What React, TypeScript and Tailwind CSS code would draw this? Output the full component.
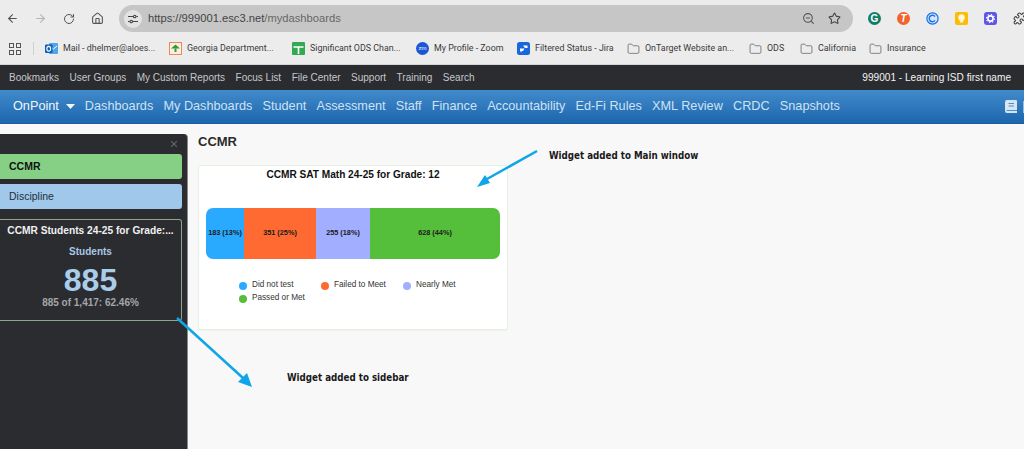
import { ArrowLeft, ArrowRight, RotateCw, Home, Star, ZoomOut, Folder, Puzzle, X } from 'lucide-react';

const topLinks = ['Bookmarks', 'User Groups', 'My Custom Reports', 'Focus List', 'File Center', 'Support', 'Training', 'Search'];
const navLinks = ['Dashboards', 'My Dashboards', 'Student', 'Assessment', 'Staff', 'Finance', 'Accountability', 'Ed-Fi Rules', 'XML Review', 'CRDC', 'Snapshots'];

const segments = [
  { label: '183 (13%)', color: 'bg-[#2aaaff]', width: 'w-[38px]' },
  { label: '351 (25%)', color: 'bg-[#ff6a33]', width: 'w-[72px]' },
  { label: '255 (18%)', color: 'bg-[#a2aeff]', width: 'w-[54px]' },
  { label: '628 (44%)', color: 'bg-[#55bf3b]', width: 'flex-1' },
];

function Bookmark({ icon, label, className, labelWidth }: { icon: React.ReactNode; label: string; className: string; labelWidth: string }) {
  return (
    <div className={`flex items-center gap-[5px] shrink-0 ${className}`}>
      {icon}
      <span className={`text-[8.9px] text-[#3a3a3a] whitespace-nowrap font-['Roboto',sans-serif] ${labelWidth}`}>{label}</span>
    </div>
  );
}

function FolderIcon() {
  return <Folder size={14} strokeWidth={1.3} className="text-[#555] w-[13px]" />;
}

function OutlookIcon() {
  return (
    <svg width="13" height="13" viewBox="0 0 13 13">
      <rect x="4" y="1" width="9" height="11" rx="1" fill="#50a5ea" />
      <path d="M5 4l3.5 3L12 4" fill="none" stroke="#fff" strokeWidth="1" />
      <rect x="0" y="2.5" width="7.5" height="8.5" rx="1" fill="#0f5fb5" />
      <ellipse cx="3.75" cy="6.75" rx="1.9" ry="2.4" fill="none" stroke="#fff" strokeWidth="1.1" />
    </svg>
  );
}

function GeorgiaIcon() {
  return (
    <svg width="13" height="13" viewBox="0 0 13 13">
      <rect x="0.5" y="0.5" width="12" height="12" fill="#fdeee2" stroke="#ee8a4e" />
      <path d="M6.5 2.5L11 6.5H2z" fill="#2f9a3f" />
      <rect x="5.5" y="6.5" width="2" height="3.5" fill="#2f9a3f" />
    </svg>
  );
}

function SheetIcon() {
  return (
    <svg width="13" height="13" viewBox="0 0 13 13">
      <rect width="13" height="13" rx="1" fill="#34a853" />
      <path d="M1.5 5h10M6.5 5v7" stroke="#fff" strokeWidth="1.6" />
    </svg>
  );
}

function JiraIcon() {
  return (
    <svg width="13" height="13" viewBox="0 0 13 13">
      <rect width="13" height="13" rx="2.5" fill="#1868db" />
      <path d="M6 3.5h4.5v2.5H8zM3 6.5h4.5L6 9H4.5v1.5L3 9z" fill="#fff" />
    </svg>
  );
}

function Legend({ color, label, className }: { color: string; label: string; className: string }) {
  return (
    <div className={`flex items-center gap-[5px] h-[13px] ${className}`}>
      <span className={`w-2 h-2 rounded-full ${color}`} />
      <span className="text-[8.2px] text-[#333]">{label}</span>
    </div>
  );
}

function Extensions() {
  return (
    <>
      <div className="ml-[15px] w-[13px] h-[13px] shrink-0 rounded-full bg-[#0f7d68] text-white text-[10px] font-bold flex items-center justify-center">G</div>
      <div className="ml-[16px] w-[13px] h-[13px] shrink-0 rounded-full bg-[#f4622d] text-white text-[10px] italic font-bold flex items-center justify-center">T</div>
      <svg width="13" height="13" viewBox="0 0 13 13" className="ml-[16px] shrink-0" fill="none">
        <circle cx="6.5" cy="6.5" r="6.5" fill="#d5e6fb" />
        <circle cx="6.5" cy="6.5" r="5.6" stroke="#1a73e8" strokeWidth="1.2" />
        <path d="M9 4.6a3.2 3.2 0 1 0 0 3.8" stroke="#1a73e8" strokeWidth="1.4" />
      </svg>
      <svg width="13" height="13" viewBox="0 0 13 13" className="ml-[16px] shrink-0">
        <rect width="13" height="13" rx="2" fill="#fbbc04" />
        <circle cx="6.5" cy="5.5" r="3.2" fill="#fff8dc" />
        <rect x="4.8" y="8" width="3.4" height="2.5" rx="0.6" fill="#fff8dc" />
      </svg>
      <svg width="13" height="13" viewBox="0 0 13 13" className="ml-[16px] shrink-0" fill="none">
        <rect width="13" height="13" rx="3" fill="#5f55e6" />
        <circle cx="6.5" cy="6.5" r="2.6" stroke="#fff" strokeWidth="1.6" />
        <circle cx="6.5" cy="6.5" r="4" stroke="#fff" strokeWidth="1.1" strokeDasharray="1.4 1.7" />
      </svg>
      <Puzzle size={13} className="text-[#444] ml-[16px] shrink-0" />
    </>
  );
}

function BrowserChrome() {
  return (
    <>
      <div className="h-[36px] bg-[#ececec] flex items-center pl-[6px] pt-[1px]">
        <ArrowLeft size={13} className="text-[#555] shrink-0" />
        <ArrowRight size={13} className="text-[#b5b5b5] ml-[15px] shrink-0" />
        <RotateCw size={12} className="text-[#555] ml-[16px] shrink-0" />
        <Home size={13} className="text-[#555] ml-[16px] shrink-0" />
        <div className="ml-[15px] w-[734px] h-[27px] rounded-full bg-[#c6c6c6] flex items-center pl-[5px] pr-[12px] shrink-0">
          <div className="w-[18px] h-[18px] rounded-full bg-[#e3e3e3] flex items-center justify-center">
            <svg width="12" height="10" viewBox="0 0 12 10" fill="none" stroke="#444" strokeWidth="1.1">
              <path d="M1 2.5h5M9.5 2.5H11M1 7.5h1.5M6 7.5h5" />
              <circle cx="7.7" cy="2.5" r="1.3" />
              <circle cx="4.2" cy="7.5" r="1.3" />
            </svg>
          </div>
          <span className="ml-[6px] text-[11.2px] text-[#444]">
            https://999001.esc3.net<span className="text-[#666]">/mydashboards</span>
          </span>
          <ZoomOut size={13} className="text-[#555] ml-auto" />
          <Star size={13} className="text-[#444] ml-[13px]" />
        </div>
        <Extensions />
      </div>
      <div className="h-[29px] bg-[#ececec] flex items-center pl-[9px] pb-[3px] border-b border-[#d6d6d6]">
        <div className="grid grid-cols-2 gap-[2px] shrink-0">
          {[0, 1, 2, 3].map(i => (
            <span key={i} className="w-[5px] h-[5px] border border-[#555]" />
          ))}
        </div>
        <span className="w-px h-[13px] bg-[#cfcfcf] ml-[12px]" />
        <Bookmark className="ml-[11px]" labelWidth="w-[92px]" label="Mail - dhelmer@aloes..." icon={<OutlookIcon />} />
        <Bookmark className="ml-[14px]" labelWidth="w-[86px]" label="Georgia Department..." icon={<GeorgiaIcon />} />
        <Bookmark className="ml-[19px]" labelWidth="w-[89px]" label="Significant ODS Chan..." icon={<SheetIcon />} />
        <Bookmark
          className="ml-[17px]"
          labelWidth="w-[70px]"
          label="My Profile - Zoom"
          icon={<span className="w-[13px] h-[13px] rounded-full bg-[#1a56d6] text-white text-[6px] flex items-center justify-center">zm</span>}
        />
        <Bookmark className="ml-[13px]" labelWidth="w-[76px]" label="Filtered Status - Jira" icon={<JiraIcon />} />
        <Bookmark className="ml-[16px]" labelWidth="w-[88px]" label="OnTarget Website an..." icon={<FolderIcon />} />
        <Bookmark className="ml-[16px]" labelWidth="w-[18px]" label="ODS" icon={<FolderIcon />} />
        <Bookmark className="ml-[15px]" labelWidth="w-[37px]" label="California" icon={<FolderIcon />} />
        <Bookmark className="ml-[14px]" labelWidth="w-[38px]" label="Insurance" icon={<FolderIcon />} />
      </div>
    </>
  );
}

export default function App() {
  return (
    <div className="relative w-[1024px] h-[449px] overflow-hidden bg-[#f8f8f8] font-['Liberation_Sans',sans-serif]">
      <BrowserChrome />

      <div className="h-[25px] bg-[#2b2c30] flex items-center pl-[9px] pr-[13px] gap-[10.5px] text-[10px] text-[#c4c7ca]">
        {topLinks.map(l => <span key={l}>{l}</span>)}
        <span className="ml-auto text-[#f2f2f2] text-[10.1px]">999001 - Learning ISD first name</span>
      </div>

      <div className="h-[34px] bg-gradient-to-b from-[#418bcb] to-[#1c66ae] border-b border-[#1a5c9e] flex items-center pl-[13px] text-[12.7px] text-[#cfe2f3]">
        <span className="text-[#f2f6fa]">OnPoint</span>
        <svg width="9" height="5" viewBox="0 0 9 5" className="ml-[7px] mr-[10px]"><path d="M0 0h9L4.5 5z" fill="#f2f6fa" /></svg>
        <div className="flex gap-[10.2px]">
          {navLinks.map(l => <span key={l}>{l}</span>)}
        </div>
        <svg width="12" height="13" viewBox="0 0 12 13" className="ml-auto"><path d="M2 0h9a1 1 0 0 1 1 1v12H2a2 2 0 0 1-2-2V2a2 2 0 0 1 2-2z" fill="#d6e6f5" /><path d="M3.5 3.5h5.5M3.5 6h5.5M1.5 10.5H12" stroke="#4f8fc8" strokeWidth="1" /></svg>
        <span className="ml-[6px] w-px h-[12px] bg-[#8fc0ea]" />
      </div>

      <div className="flex pt-[10px] h-[325px]">
        <aside className="w-[188px] h-[315px] bg-[#2b2c30] rounded-tr-[4px] border-r border-[#8a8a8a] relative pr-[5px] shrink-0">
          <X size={10} strokeWidth={2.5} className="absolute right-[8px] top-[5px] text-[#6e7074]" />
          <div className="pt-[20px] flex flex-col">
            <div className="h-[25px] bg-[#85d085] rounded-r-[3px] flex items-center pl-[9px] text-[10.5px] font-bold text-[#111]">CCMR</div>
            <div className="mt-[5px] h-[25px] bg-[#a0c8ea] rounded-r-[3px] flex items-center pl-[9px] text-[10.5px] text-[#22303c]">Discipline</div>
            <div className="mt-[10px] h-[102px] border border-l-0 border-[#8fa58f] rounded-r-[3px] flex flex-col items-center">
              <div className="mt-[3px] text-[10.2px] font-bold text-[#f0f0f0] whitespace-nowrap">CCMR Students 24-25 for Grade:...</div>
              <div className="mt-[6px] text-[10px] font-bold text-[#a9c8e6]">Students</div>
              <div className="mt-[6px] text-[32px] leading-[30px] font-bold text-[#aacdea]">885</div>
              <div className="mt-[2px] text-[10px] leading-[11px] font-bold text-[#a3a6a9]">885 of 1,417: 62.46%</div>
            </div>
          </div>
        </aside>

        <main className="pl-[10px] pt-[1px]">
          <h1 className="text-[13px] leading-[14px] font-bold text-[#2b2b2b]">CCMR</h1>
          <div className="mt-[16px] w-[310px] h-[165px] bg-white border border-[#e3f3e0] rounded-[3px] px-[7px] shadow-[0_1px_1px_rgba(0,0,0,0.03)]">
            <div className="mt-[2px] text-center text-[10.1px] leading-[13px] font-bold text-[#111]">CCMR SAT Math 24-25 for Grade: 12</div>
            <div className="mt-[27px] flex h-[51px] rounded-[7px] overflow-hidden">
              {segments.map(s => (
                <div key={s.label} className={`${s.color} ${s.width} flex items-center justify-center text-[7.3px] font-bold text-[#1a1a1a]`}>
                  {s.label}
                </div>
              ))}
            </div>
            <div className="mt-[20px] ml-[33px] flex flex-col">
              <div className="flex">
                <Legend color="bg-[#2aaaff]" label="Did not test" className="w-[82px]" />
                <Legend color="bg-[#ff6a33]" label="Failed to Meet" className="w-[82px]" />
                <Legend color="bg-[#a2aeff]" label="Nearly Met" className="w-[82px]" />
              </div>
              <Legend color="bg-[#55bf3b]" label="Passed or Met" className="w-[82px]" />
            </div>
          </div>
        </main>
      </div>

      {/* annotations sit on top of the screenshot */}
      <svg className="absolute left-0 top-0 pointer-events-none" width="1024" height="449" fill="#0ea5e9">
        <path d="M537 151 L487 179" stroke="#0ea5e9" strokeWidth="2.5" />
        <path d="M477 187 L485 175 L490 183 Z" />
        <path d="M177 318 L243 378" stroke="#0ea5e9" strokeWidth="2.5" />
        <path d="M252 387 L238 382 L247 373 Z" />
      </svg>
      <span className="absolute left-[549px] top-[149px] text-[9.7px] font-bold font-stretch-condensed text-[#1a1a1a] font-['DejaVu_Sans',sans-serif]">Widget added to Main window</span>
      <span className="absolute left-[287px] top-[371px] text-[9.7px] font-bold font-stretch-condensed text-[#1a1a1a] font-['DejaVu_Sans',sans-serif]">Widget added to sidebar</span>
    </div>
  );
}
